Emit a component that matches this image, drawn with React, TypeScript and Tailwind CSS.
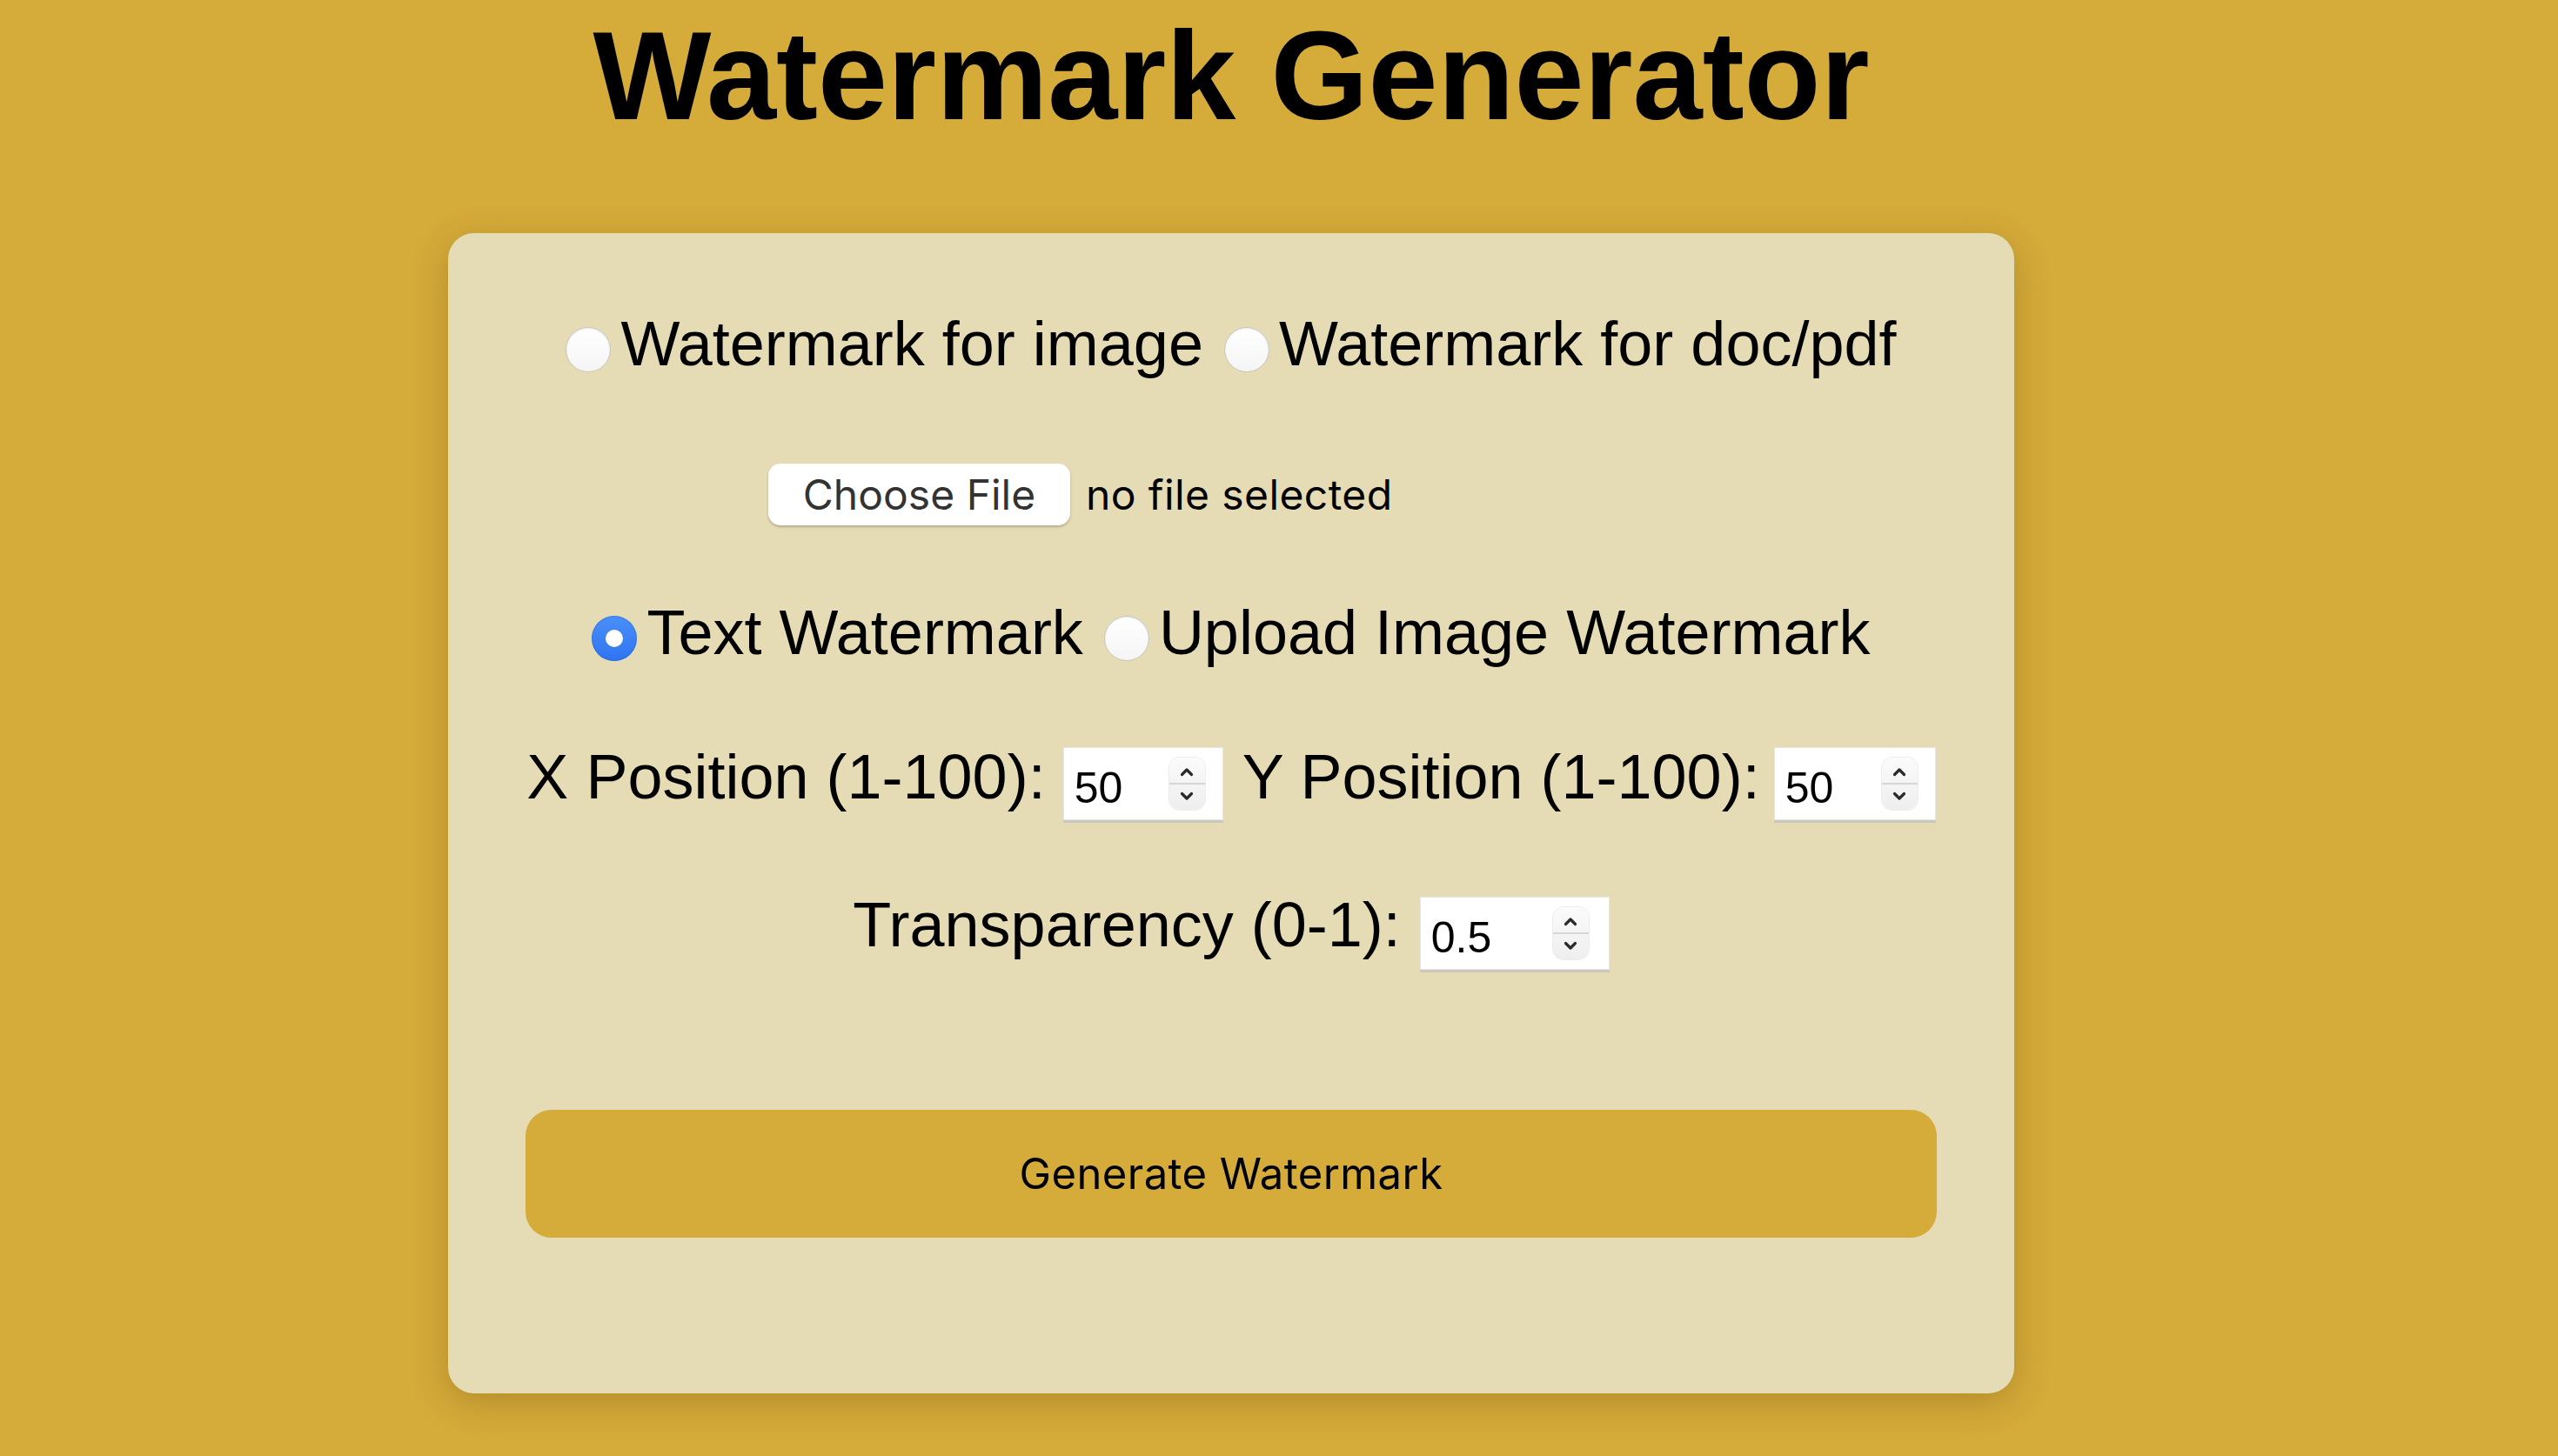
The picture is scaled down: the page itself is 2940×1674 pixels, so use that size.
import React from "react";

const Radio = ({ checked = false }: { checked?: boolean }) =>
  checked ? (
    <span className="mt-[17px] mr-[11px] flex h-[52px] w-[52px] shrink-0 items-center justify-center rounded-full bg-gradient-to-b from-[#4a8ff8] to-[#2f74f0] shadow-[inset_0_0_0_1px_rgba(30,90,200,0.35)]">
      <span className="h-[20px] w-[20px] rounded-full bg-white" />
    </span>
  ) : (
    <span className="mt-[17px] mr-[11px] h-[52px] w-[52px] shrink-0 rounded-full border-[1.5px] border-[#c9c6bd] bg-gradient-to-b from-white to-[#f5f5f5] shadow-[inset_0_1px_2px_rgba(0,0,0,0.08)]" />
  );

const Spinner = () => (
  <span className="flex h-[60px] w-[41px] shrink-0 flex-col overflow-hidden rounded-[12px] bg-gradient-to-b from-[#fbfbfb] to-[#eeeeee] shadow-[0_0_0_1px_rgba(0,0,0,0.07)]">
    <span className="flex flex-1 items-center justify-center border-b-[2px] border-[#d6d6d6] pt-[2px]">
      <svg width="18" height="12" viewBox="0 0 18 12" fill="none">
        <path d="M3.5 9.5 L9 4 L14.5 9.5" stroke="#2a2a2a" strokeWidth="3.2" strokeLinecap="round" strokeLinejoin="round" />
      </svg>
    </span>
    <span className="flex flex-1 items-center justify-center pb-[2px]">
      <svg width="18" height="12" viewBox="0 0 18 12" fill="none">
        <path d="M3.5 2.5 L9 8 L14.5 2.5" stroke="#2a2a2a" strokeWidth="3.2" strokeLinecap="round" strokeLinejoin="round" />
      </svg>
    </span>
  </span>
);

const NumberBox = ({
  value,
  widthClass,
  extraClass,
}: {
  value: string;
  widthClass: string;
  extraClass: string;
}) => (
  <span
    className={`flex h-[84px] items-center border border-[#e6e6e6] bg-white pl-[12px] pr-[20px] shadow-[0_3px_0_#cbc7bb] ${widthClass} ${extraClass}`}
  >
    <span className="mt-[10px] flex-1 font-['Liberation_Sans',Arial,sans-serif] text-[50px] leading-[50px] text-black">
      {value}
    </span>
    <Spinner />
  </span>
);

export default function App() {
  return (
    <div className="min-h-[1674px] w-full bg-[#d5ab3a] font-['Liberation_Sans',Arial,sans-serif] text-black">
      <div className="flex w-[2830px] flex-col items-center">
        <h1 className="m-0 text-[144px] font-bold leading-[176px] text-black">Watermark Generator</h1>

        <div className="mt-[92px] flex w-[1800px] flex-col items-center rounded-[30px] bg-[#e5dcb6] px-[89px] pt-[91px] pb-[179px] shadow-[0_10px_40px_rgba(90,60,0,0.28)]">
          {/* Row 1 */}
          <div className="flex h-[72px] items-start text-[72px] leading-[72px]">
            <label className="flex items-start">
              <Radio />
              <span>Watermark for image</span>
            </label>
            <label className="ml-[24px] flex items-start">
              <Radio />
              <span>Watermark for doc/pdf</span>
            </label>
          </div>

          {/* Row 2: file input */}
          <div className="mt-[102px] flex h-[71px] w-[1064px] items-center font-['Inter',sans-serif]">
            <span className="flex h-[71px] w-[347px] items-center justify-center rounded-[14px] bg-white text-[48px] text-[#333] shadow-[0_2px_3px_rgba(0,0,0,0.22)]">
              Choose File
            </span>
            <span className="ml-[18px] text-[48px] tracking-[0.4px] text-black">no file selected</span>
          </div>

          {/* Row 3 */}
          <div className="mt-[87px] flex h-[72px] items-start text-[72px] leading-[72px]">
            <label className="flex items-start">
              <Radio checked />
              <span>Text Watermark</span>
            </label>
            <label className="ml-[24px] flex items-start">
              <Radio />
              <span>Upload Image Watermark</span>
            </label>
          </div>

          {/* Row 4 */}
          <div className="mt-[94px] flex h-[72px] items-start text-[72px] leading-[72px]">
            <span>X Position (1-100):</span>
            <NumberBox value="50" widthClass="w-[184px]" extraClass="ml-[20px] mt-[2px]" />
            <span className="ml-[22px]">Y Position (1-100):</span>
            <NumberBox value="50" widthClass="w-[186px]" extraClass="ml-[16px] mt-[2px]" />
          </div>

          {/* Row 5 */}
          <div className="mt-[98px] flex h-[72px] items-start text-[72px] leading-[72px]">
            <span>Transparency (0-1):</span>
            <NumberBox value="0.5" widthClass="w-[218px]" extraClass="ml-[22px] mt-[4px] pr-[23px]" />
          </div>

          {/* Button */}
          <button className="mt-[177px] flex h-[147px] w-full items-center justify-center rounded-[30px] border-0 bg-[#d5ab3a] font-['Inter',sans-serif] text-[49px] tracking-[0.4px] text-black">
            Generate Watermark
          </button>
        </div>
      </div>
    </div>
  );
}
